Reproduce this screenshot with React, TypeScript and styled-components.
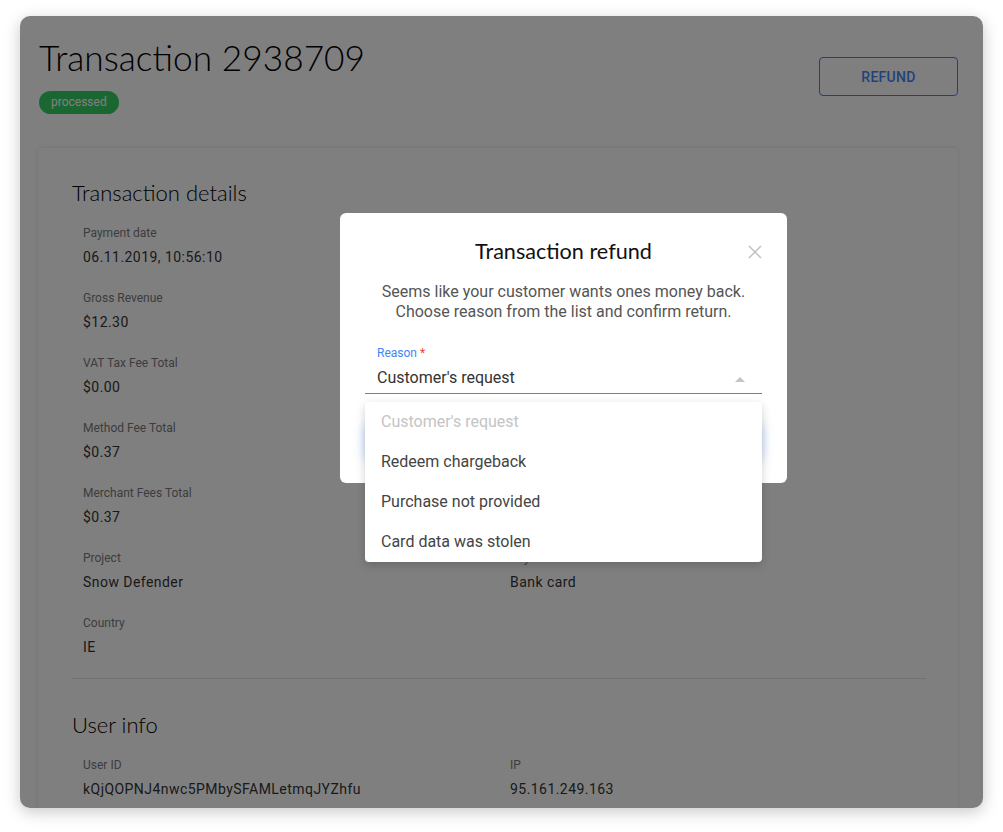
import styled, { createGlobalStyle } from 'styled-components'

const Global = createGlobalStyle`
  * { box-sizing: border-box; }
  html, body { margin: 0; padding: 0; background: #fff; }
  body { font-family: Roboto, "Noto Sans", sans-serif; color: #333; }
`

const headingFont = `Lato, "Noto Sans", sans-serif`

// page frame

const Page = styled.div`
  padding: 16px 20px 24px;
`

const Card = styled.div`
  position: relative;
  height: 792px;
  overflow: hidden;
  background: #fff;
  border-radius: 10px;
  box-shadow: 0 4px 16px rgba(0, 0, 0, 0.22);
  padding: 21px 25px 0 18px;
`

const Header = styled.div`
  display: flex;
  justify-content: space-between;
  align-items: flex-start;
`

const TitleBlock = styled.div`
  display: flex;
  flex-direction: column;
  align-items: flex-start;
  padding-left: 1px;
`

const PageTitle = styled.h1`
  margin: 0;
  font-family: ${headingFont};
  font-weight: 300;
  font-size: 35.3px;
  line-height: 42px;
  color: #000;
`

const StatusBadge = styled.span`
  margin-top: 12px;
  height: 23px;
  padding: 0 12px;
  border-radius: 12px;
  background: #36ce64;
  color: #fff;
  font-size: 12px;
  line-height: 23px;
`

const OutlineButton = styled.button`
  margin-top: 20px;
  width: 139px;
  height: 39px;
  background: transparent;
  border: 1px solid #4285f4;
  border-radius: 4px;
  color: #4285f4;
  font-family: Roboto, sans-serif;
  font-size: 14px;
  font-weight: 500;
  letter-spacing: 0.3px;
`

// details panel

const Panel = styled.div`
  margin-top: 34px;
  border-radius: 4px;
  box-shadow: 0 0 4px rgba(0, 0, 0, 0.12);
  padding: 31px 32px 40px 34px;
`

const SectionTitle = styled.h2`
  margin: 0 0 18px;
  font-family: ${headingFont};
  font-weight: 300;
  font-size: 22px;
  line-height: 28px;
  color: #000;
`

const Columns = styled.div`
  display: grid;
  grid-template-columns: 1fr 1fr;
`

const Column = styled.div`
  padding-left: 11px;
`

const Field = styled.div`
  margin-bottom: 23px;
`

const FieldLabel = styled.div`
  font-size: 12px;
  line-height: 16px;
  color: #7a7a7a;
`

const FieldValue = styled.div`
  margin-top: 6px;
  font-size: 14px;
  line-height: 20px;
  letter-spacing: 0.45px;
  color: #333;
`

const Divider = styled.hr`
  margin: -2px 0 32px;
  border: none;
  border-top: 1px solid #e4e4e4;
`

// modal

const Overlay = styled.div`
  position: absolute;
  inset: 0;
  background: rgba(0, 0, 0, 0.5);
`

const Modal = styled.div`
  position: absolute;
  left: 320px;
  top: 197px;
  width: 447px;
  background: #fff;
  border-radius: 6px;
  padding: 25px 25px 25px;
  text-align: center;
`

const ModalTitle = styled.h3`
  margin: 0;
  font-family: ${headingFont};
  font-weight: 400;
  font-size: 21.6px;
  line-height: 26px;
  color: #111;
`

const CloseButton = styled.button`
  position: absolute;
  top: 32px;
  right: 25px;
  width: 14px;
  height: 14px;
  padding: 0;
  border: none;
  background: none;
  svg { display: block; }
`

const ModalText = styled.p`
  margin: 18px 0 23px;
  font-size: 16px;
  line-height: 20px;
  color: #555;
`

const SelectField = styled.div`
  position: relative;
  text-align: left;
`

const SelectLabel = styled.div`
  padding-left: 12px;
  font-size: 12px;
  line-height: 16px;
  color: #4285f4;
  span { color: #f44336; }
`

const SelectControl = styled.div`
  display: flex;
  align-items: center;
  justify-content: space-between;
  margin-top: 7px;
  padding: 0 17px 5px 12px;
  border-bottom: 1px solid #4285f4;
  font-size: 16px;
  line-height: 20px;
  color: #333;
`

const Caret = styled.span`
  width: 0;
  height: 0;
  border-left: 5px solid transparent;
  border-right: 5px solid transparent;
  border-bottom: 5px solid #c4c4c4;
  margin-top: 2px;
`

const Menu = styled.ul`
  position: absolute;
  left: 0;
  right: 0;
  top: calc(100% + 8px);
  margin: 0;
  padding: 0;
  list-style: none;
  background: #fff;
  border-radius: 4px;
  box-shadow: 0 3px 10px rgba(0, 0, 0, 0.18);
  z-index: 2;
`

const MenuItem = styled.li<{ $disabled?: boolean }>`
  height: 40px;
  padding-left: 16px;
  font-size: 16px;
  line-height: 40px;
  color: ${({ $disabled }) => ($disabled ? '#c4c4c4' : '#444')};
`

const ConfirmButton = styled.button`
  display: block;
  width: 100%;
  height: 36px;
  margin-top: 28px;
  border: none;
  border-radius: 4px;
  background: #4285f4;
  color: #fff;
  font-family: Roboto, sans-serif;
  font-size: 14px;
  font-weight: 500;
  box-shadow: 0 2px 12px rgba(66, 133, 244, 0.35);
`

const details: [string, string][][] = [
  [
    ['Payment date', '06.11.2019, 10:56:10'],
    ['Gross Revenue', '$12.30'],
    ['VAT Tax Fee Total', '$0.00'],
    ['Method Fee Total', '$0.37'],
    ['Merchant Fees Total', '$0.37'],
    ['Project', 'Snow Defender'],
    ['Country', 'IE'],
  ],
  [
    ['Transaction ID', '2938709'],
    ['Net Revenue', '$11.56'],
    ['VAT Tax Fee', '0%'],
    ['Method Fee', '3%'],
    ['Merchant Fee', '3%'],
    ['Payment method', 'Bank card'],
  ],
]

const userInfo: [string, string][][] = [
  [['User ID', 'kQjQOPNJ4nwc5PMbySFAMLetmqJYZhfu']],
  [['IP', '95.161.249.163']],
]

const reasons = [
  "Customer's request",
  'Redeem chargeback',
  'Purchase not provided',
  'Card data was stolen',
]

const FieldGrid = ({ columns }: { columns: [string, string][][] }) => (
  <Columns>
    {columns.map((col, i) => (
      <Column key={i}>
        {col.map(([label, value]) => (
          <Field key={label}>
            <FieldLabel>{label}</FieldLabel>
            <FieldValue>{value}</FieldValue>
          </Field>
        ))}
      </Column>
    ))}
  </Columns>
)

export default function App() {
  return (
    <>
      <Global />
      <Page>
        <Card>
          <Header>
            <TitleBlock>
              <PageTitle>Transaction 2938709</PageTitle>
              <StatusBadge>processed</StatusBadge>
            </TitleBlock>
            <OutlineButton>REFUND</OutlineButton>
          </Header>

          <Panel>
            <SectionTitle>Transaction details</SectionTitle>
            <FieldGrid columns={details} />
            <Divider />
            <SectionTitle>User info</SectionTitle>
            <FieldGrid columns={userInfo} />
          </Panel>

          <Overlay>
            <Modal>
              <ModalTitle>Transaction refund</ModalTitle>
              <CloseButton aria-label="close">
                <svg width="14" height="14" viewBox="0 0 14 14">
                  <path d="M1 1 13 13M13 1 1 13" stroke="#bdbdbd" strokeWidth="1.4" fill="none" />
                </svg>
              </CloseButton>
              <ModalText>
                Seems like your customer wants ones money back.
                <br />
                Choose reason from the list and confirm return.
              </ModalText>
              <SelectField>
                <SelectLabel>
                  Reason <span>*</span>
                </SelectLabel>
                <SelectControl>
                  {reasons[0]}
                  <Caret />
                </SelectControl>
                <Menu>
                  {reasons.map((r, i) => (
                    <MenuItem key={r} $disabled={i === 0}>
                      {r}
                    </MenuItem>
                  ))}
                </Menu>
              </SelectField>
              <ConfirmButton>CONFIRM</ConfirmButton>
            </Modal>
          </Overlay>
        </Card>
      </Page>
    </>
  )
}
